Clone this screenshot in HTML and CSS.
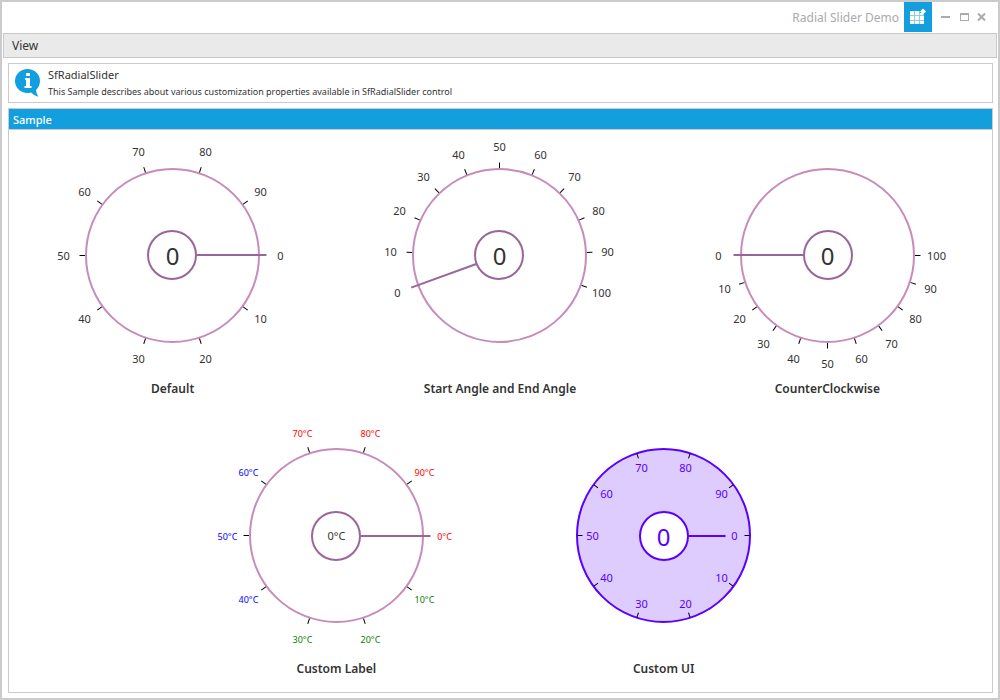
FILE: index.html
```html
<!DOCTYPE html>
<html lang="en">
<head>
<meta charset="utf-8">
<title>Radial Slider Demo</title>
<link rel="stylesheet" href="styles.css">
</head>
<body>
<div class="window">
  <header class="titlebar">
    <h1 class="title">Radial Slider Demo</h1>
    <svg class="app-icon" viewBox="0 0 28 30" aria-hidden="true">
      <rect width="28" height="30" fill="#139fdd"/>
      <path fill="#fff" d="M6 9h4v4H6zM11 9h4v4h-4zM6 14h4v4H6zM11 14h4v4h-4zM16 14h4v4h-4zM6 19h4v3H6zM11 19h4v3h-4zM16 19h4v3h-4zM16 11h2l2 2H16zM19 6.500l3 3-3 3-3-3z"/>
      <path fill="#fff" fill-opacity=".5" d="M10 9h1v13h-1zM15 9h1v13h-1zM6 13h14v1H6zM6 18h14v1H6z"/>
    </svg>
    <div class="window-buttons">
      <button class="window-button" type="button" aria-label="Minimize"><svg class="button-icon" viewBox="0 0 10 10"><path fill="#ababab" d="M0 4h9v2H0z"/></svg></button>
      <button class="window-button" type="button" aria-label="Maximize"><svg class="button-icon" viewBox="0 0 10 10"><path fill="#ababab" fill-rule="evenodd" d="M1 1h9v8H1zM2 3h7v5H2z"/></svg></button>
      <button class="window-button" type="button" aria-label="Close"><svg class="button-icon" viewBox="0 0 10 10"><path fill="none" stroke="#ababab" stroke-width="2" d="M1 1.500l7 7M8 1.500l-7 7"/></svg></button>
    </div>
  </header>
  <nav class="menubar"><button class="menu-item" type="button">View</button></nav>
  <main class="content">
    <section class="info">
      <svg class="info-icon" viewBox="0 0 26 28" aria-hidden="true">
        <path fill="#139fdd" d="M12.500 0C19.500 0 25 5.300 25 12c0 3.600-1.600 6.800-4 9 .4 2.400 1 4.500 2.300 6.800-3-1-5.300-2.700-7.300-4.400-1.100.4-2.300.6-3.500.6C5.500 24 0 18.700 0 12S5.500 0 12.500 0z"/>
        <path fill="#fff" d="M11 4h4v3h-4zM10 9h5v8h1.500v2H9.500v-2H11v-6H10z"/>
      </svg>
      <div class="info-text">
        <h2 class="info-title">SfRadialSlider</h2>
        <p class="info-description">This Sample describes about various customization properties available in SfRadialSlider control</p>
      </div>
    </section>
    <section class="sample">
      <h2 class="sample-title">Sample</h2>
      <div class="dials">

        <div class="dial-card">
          <div class="dial">
            <svg class="dial-face" viewBox="-130.5 -120.5 261 241" aria-hidden="true">
              <g class="ticks">
                <path d="M87 0h6" transform="rotate(36)"/><path d="M87 0h6" transform="rotate(72)"/><path d="M87 0h6" transform="rotate(108)"/><path d="M87 0h6" transform="rotate(144)"/><path d="M87 0h6" transform="rotate(180)"/><path d="M87 0h6" transform="rotate(216)"/><path d="M87 0h6" transform="rotate(252)"/><path d="M87 0h6" transform="rotate(288)"/><path d="M87 0h6" transform="rotate(324)"/>
              </g>
              <circle class="rim" r="86.500"/>
              <circle class="hub" cx="-0.500" cy="-0.500" r="24"/>
              <path class="needle" d="M24-0.500H94"/>
              <g class="labels">
                <text x="108" y="4">0</text><text x="88" y="67">10</text><text x="33" y="107">20</text><text x="-34" y="107">30</text><text x="-88" y="67">40</text><text x="-109" y="4">50</text><text x="-88" y="-60">60</text><text x="-34" y="-100">70</text><text x="33" y="-100">80</text><text x="88" y="-60">90</text>
              </g>
              <text class="value" y="9">0</text>
            </svg>
            <input class="dial-input" id="default" type="range" min="0" max="100" value="0">
          </div>
          <label class="caption" for="default">Default</label>
        </div>

        <div class="dial-card">
          <div class="dial">
            <svg class="dial-face" viewBox="-130.5 -120.5 261 241" aria-hidden="true">
              <g class="ticks">
                <path d="M87 0h6" transform="rotate(182)"/><path d="M87 0h6" transform="rotate(204)"/><path d="M87 0h6" transform="rotate(226)"/><path d="M87 0h6" transform="rotate(248)"/><path d="M87 0h6" transform="rotate(270)"/><path d="M87 0h6" transform="rotate(292)"/><path d="M87 0h6" transform="rotate(314)"/><path d="M87 0h6" transform="rotate(336)"/><path d="M87 0h6" transform="rotate(358)"/><path d="M87 0h6" transform="rotate(20)"/>
              </g>
              <circle class="rim" r="86.500"/>
              <circle class="hub" cx="-0.500" cy="-0.500" r="24"/>
              <path class="needle" d="M24 0H94" transform="rotate(160)"/>
              <g class="labels">
                <text x="-102" y="41">0</text><text x="-109" y="0">10</text><text x="-100" y="-41">20</text><text x="-76" y="-75">30</text><text x="-41" y="-97">40</text><text x="0" y="-105">50</text><text x="41" y="-97">60</text><text x="75" y="-75">70</text><text x="99" y="-41">80</text><text x="108" y="0">90</text><text x="102" y="41">100</text>
              </g>
              <text class="value" y="9">0</text>
            </svg>
            <input class="dial-input" id="angles" type="range" min="0" max="100" value="0">
          </div>
          <label class="caption" for="angles">Start Angle and End Angle</label>
        </div>

        <div class="dial-card">
          <div class="dial">
            <svg class="dial-face" viewBox="-130.5 -120.5 261 241" aria-hidden="true">
              <g class="ticks">
                <path d="M87 0h6"/><path d="M87 0h6" transform="rotate(18)"/><path d="M87 0h6" transform="rotate(36)"/><path d="M87 0h6" transform="rotate(54)"/><path d="M87 0h6" transform="rotate(72)"/><path d="M87 0h6" transform="rotate(90)"/><path d="M87 0h6" transform="rotate(108)"/><path d="M87 0h6" transform="rotate(126)"/><path d="M87 0h6" transform="rotate(144)"/><path d="M87 0h6" transform="rotate(162)"/>
              </g>
              <circle class="rim" r="86.500"/>
              <circle class="hub" cx="0.500" cy="-0.500" r="24"/>
              <path class="needle" d="M-24-0.500H-94"/>
              <g class="labels">
                <text x="-109" y="4">0</text><text x="-103" y="37">10</text><text x="-88" y="67">20</text><text x="-64" y="92">30</text><text x="-34" y="107">40</text><text x="0" y="112">50</text><text x="34" y="107">60</text><text x="64" y="92">70</text><text x="88" y="67">80</text><text x="103" y="37">90</text><text x="109" y="4">100</text>
              </g>
              <text class="value" y="9">0</text>
            </svg>
            <input class="dial-input" id="counter" type="range" min="0" max="100" value="0">
          </div>
          <label class="caption" for="counter">CounterClockwise</label>
        </div>

        <div class="dial-card dial-card-offset">
          <div class="dial">
            <svg class="dial-face" viewBox="-130.5 -120.5 261 241" aria-hidden="true">
              <g class="ticks">
                <path d="M87 0h6" transform="rotate(36)"/><path d="M87 0h6" transform="rotate(72)"/><path d="M87 0h6" transform="rotate(108)"/><path d="M87 0h6" transform="rotate(144)"/><path d="M87 0h6" transform="rotate(180)"/><path d="M87 0h6" transform="rotate(216)"/><path d="M87 0h6" transform="rotate(252)"/><path d="M87 0h6" transform="rotate(288)"/><path d="M87 0h6" transform="rotate(324)"/>
              </g>
              <circle class="rim" r="86.500"/>
              <circle class="hub" cx="-0.500" cy="0.500" r="24"/>
              <path class="needle" d="M24 0.500H94"/>
              <g class="labels labels-small">
                <text class="hot" x="108" y="4">0°C</text><text class="cool" x="88" y="67">10°C</text><text class="cool" x="34" y="107">20°C</text><text class="cool" x="-34" y="107">30°C</text><text class="cold" x="-88" y="67">40°C</text><text class="cold" x="-109" y="4">50°C</text><text class="cold" x="-88" y="-60">60°C</text><text class="hot" x="-34" y="-99">70°C</text><text class="hot" x="34" y="-99">80°C</text><text class="hot" x="88" y="-60">90°C</text>
              </g>
              <text class="value value-small" y="4">0°C</text>
            </svg>
            <input class="dial-input" id="custom-label" type="range" min="0" max="100" value="0">
          </div>
          <label class="caption" for="custom-label">Custom Label</label>
        </div>

        <div class="dial-card">
          <div class="dial dial-violet">
            <svg class="dial-face" viewBox="-130.5 -120.5 261 241" aria-hidden="true">
              <circle class="rim" r="86.500"/>
              <g class="ticks">
                <path d="M81 0h5"/><path d="M81 0h5" transform="rotate(36)"/><path d="M81 0h5" transform="rotate(72)"/><path d="M81 0h5" transform="rotate(108)"/><path d="M81 0h5" transform="rotate(144)"/><path d="M81 0h5" transform="rotate(180)"/><path d="M81 0h5" transform="rotate(216)"/><path d="M81 0h5" transform="rotate(252)"/><path d="M81 0h5" transform="rotate(288)"/><path d="M81 0h5" transform="rotate(324)"/>
              </g>
              <circle class="hub" cx="0.500" cy="0.500" r="24"/>
              <path class="needle" d="M24 0.500H62"/>
              <g class="labels">
                <text x="71" y="4">0</text><text x="58" y="46">10</text><text x="22" y="72">20</text><text x="-22" y="72">30</text><text x="-57" y="46">40</text><text x="-71" y="4">50</text><text x="-57" y="-38">60</text><text x="-22" y="-64">70</text><text x="22" y="-64">80</text><text x="58" y="-38">90</text>
              </g>
              <text class="value" y="10">0</text>
            </svg>
            <input class="dial-input" id="custom-ui" type="range" min="0" max="100" value="0">
          </div>
          <label class="caption" for="custom-ui">Custom UI</label>
        </div>

      </div>
    </section>
  </main>
</div>
</body>
</html>
```
FILE: styles.css
```css
* {
  box-sizing: border-box;
}

body {
  margin: 0;
  background: #fff;
  color: #333;
  font: 12px/16px "Noto Sans", "Open Sans", sans-serif;
}

h1, h2, p {
  margin: 0;
  font-size: 12px;
  font-weight: 400;
}

button {
  padding: 0;
  border: 0;
  background: none;
  color: inherit;
  font: inherit;
}

.window {
  display: flex;
  flex-direction: column;
  min-height: 100vh;
  border: 2px solid #cbcbcb;
}

.titlebar {
  display: flex;
  align-items: flex-start;
  justify-content: flex-end;
  height: 31px;
  padding-right: 11px;
}

.title {
  margin-right: 5px;
  color: #aaa;
  line-height: 32px;
}

.app-icon {
  width: 28px;
  height: 30px;
}

.window-buttons {
  display: flex;
  gap: 8px;
  margin-left: 9px;
  padding-top: 10px;
}

.window-button {
  display: flex;
  width: 10px;
  height: 10px;
}

.button-icon {
  width: 10px;
  height: 10px;
}

.menubar {
  display: flex;
  align-items: center;
  height: 25px;
  margin: 0 1px;
  padding: 0 8px;
  border: 1px solid #c9c9c9;
  background: #eaeaea;
}

.content {
  display: flex;
  flex: 1;
  flex-direction: column;
  gap: 5px;
  padding: 5px 5px 5px 6px;
}

.info {
  display: flex;
  gap: 7px;
  height: 40px;
  padding: 4px 6px;
  border: 1px solid #cbcbcb;
}

.info-icon {
  width: 26px;
  height: 28px;
  margin-top: 1px;
}

.info-title {
  font-size: 11px;
  line-height: 14px;
}

.info-description {
  padding-top: 3px;
  font-size: 9px;
  line-height: 14px;
}

.sample {
  display: flex;
  flex: 1;
  flex-direction: column;
  border: 1px solid #cbcbcb;
}

.sample-title {
  padding: 2px 4px 0;
  border-bottom: 1px solid #cbcbcb;
  background: #139fdd;
  color: #fff;
  font-size: 11px;
  font-weight: 500;
  line-height: 18px;
}

.dials {
  display: grid;
  flex: 1;
  grid-template-columns: repeat(6, 1fr);
  grid-template-rows: 1fr 1fr;
  padding: 0 1px 2px 0;
}

.dial-card {
  display: flex;
  grid-column: span 2;
  flex-direction: column;
  align-items: center;
  padding-top: 5px;
}

.dial-card-offset {
  grid-column: 2 / span 2;
}

.dial {
  position: relative;
  --rim: #c78cba;
  --accent: #996699;
  --fill: none;
  --label: #333;
}

.dial-violet {
  --rim: #5a00ff;
  --accent: #5a00ff;
  --fill: #deccff;
  --label: #5a00ff;
}

.dial-face {
  display: block;
  width: 261px;
  height: 241px;
}

.dial-input {
  position: absolute;
  inset: 0;
  width: 100%;
  height: 100%;
  margin: 0;
  opacity: 0;
}

.ticks {
  stroke: #000;
  stroke-width: 1;
}

.rim {
  fill: var(--fill);
  stroke: var(--rim);
  stroke-width: 2;
}

.hub {
  fill: #fff;
  stroke: var(--accent);
  stroke-width: 2;
}

.needle {
  stroke: var(--accent);
  stroke-width: 2;
}

.labels {
  fill: var(--label);
  font-size: 11px;
  text-anchor: middle;
}

.labels-small {
  font-size: 9px;
}

.hot {
  fill: #f00;
}

.cool {
  fill: #008000;
}

.cold {
  fill: #00f;
}

.value {
  fill: var(--label);
  font-size: 24px;
  text-anchor: middle;
}

.value-small {
  font-size: 11px;
}

.caption {
  padding-top: 5px;
  font-weight: 600;
}
```
